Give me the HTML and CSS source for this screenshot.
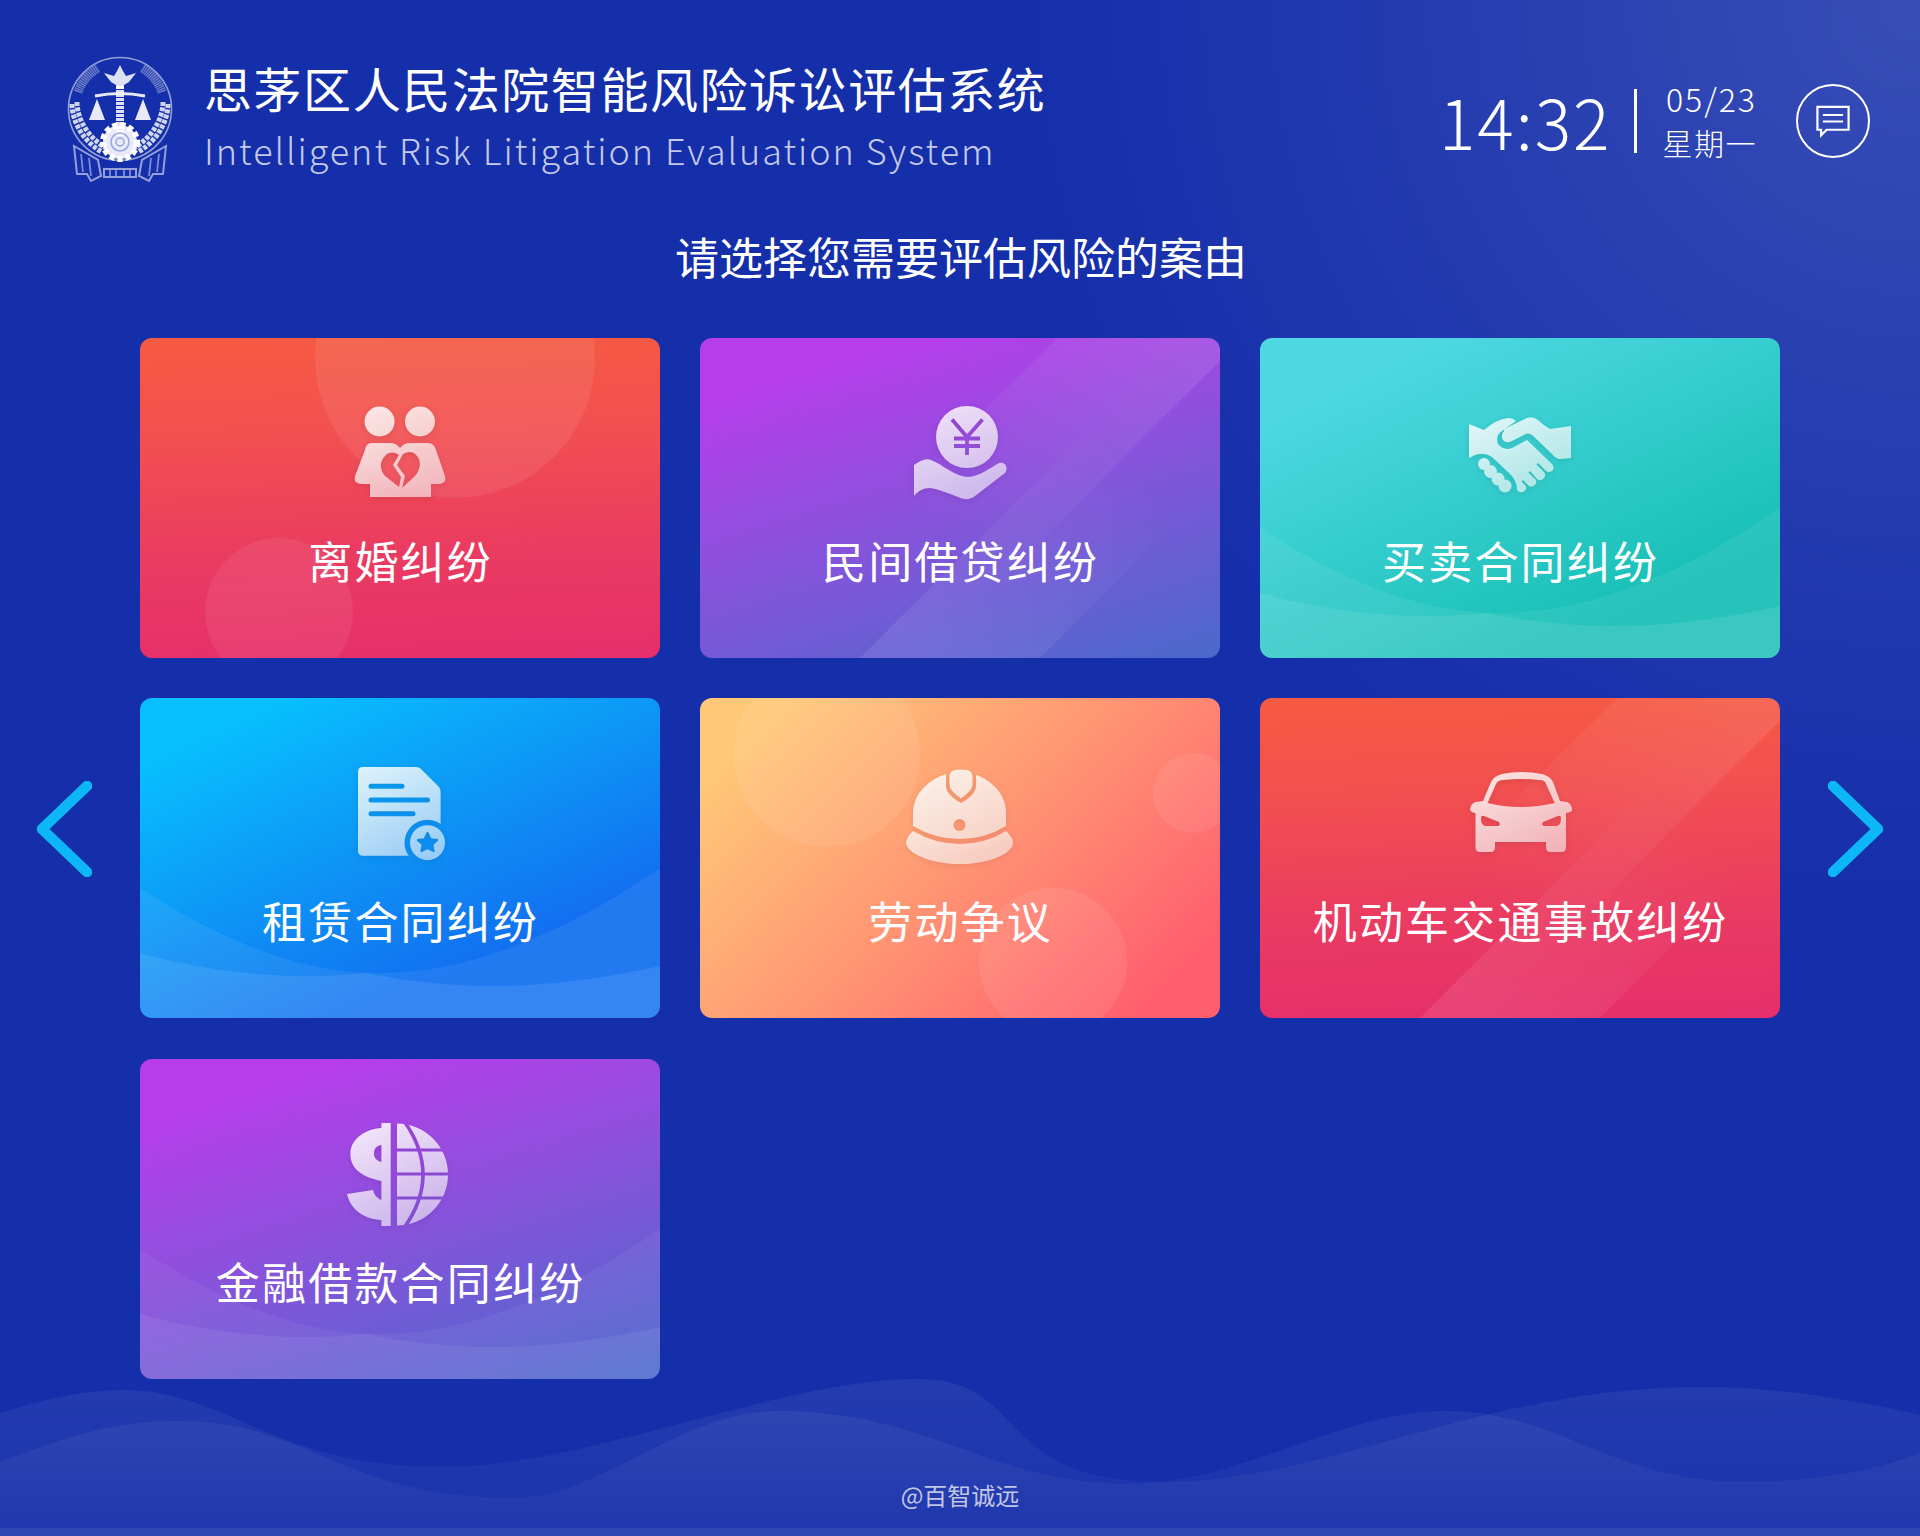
FILE: index.html
```html
<!DOCTYPE html>
<html lang="zh-CN">
<head>
<meta charset="utf-8">
<title>思茅区人民法院智能风险诉讼评估系统</title>
<link rel="stylesheet" href="styles.css">
</head>
<body>
<svg class="defs" aria-hidden="true">
  <defs>
    <linearGradient id="ig" gradientUnits="userSpaceOnUse" x1="15" y1="0" x2="70" y2="105">
      <stop offset="0" stop-color="#fff" stop-opacity=".88"/>
      <stop offset="1" stop-color="#fff" stop-opacity=".58"/>
    </linearGradient>
    <linearGradient id="bandA" gradientUnits="userSpaceOnUse" x1="480" y1="0" x2="260" y2="220">
      <stop offset="0" stop-color="#fff" stop-opacity=".09"/>
      <stop offset="1" stop-color="#fff" stop-opacity="0"/>
    </linearGradient>
    <linearGradient id="bandB" gradientUnits="userSpaceOnUse" x1="230" y1="320" x2="430" y2="120">
      <stop offset="0" stop-color="#fff" stop-opacity=".09"/>
      <stop offset="1" stop-color="#fff" stop-opacity="0"/>
    </linearGradient>
    <linearGradient id="waveFill" gradientUnits="userSpaceOnUse" x1="0" y1="0" x2="0" y2="150">
      <stop offset="0" stop-color="#fff" stop-opacity=".065"/>
      <stop offset="1" stop-color="#fff" stop-opacity=".025"/>
    </linearGradient>
    <g id="bands">
      <path d="M357,0 H543 L223,320 H37 Z" fill="url(#bandA)"/>
      <path d="M480,0 H660 L340,320 H160 Z" fill="url(#bandB)"/>
    </g>
    <g id="waves">
      <path d="M0,190 C70,235 150,275 240,275 C340,275 440,225 520,170 V320 H0Z" fill="#fff" fill-opacity=".07"/>
      <path d="M0,255 C60,272 120,278 165,278 C190,278 210,277 225,275 C265,283 310,288 352,288 C420,288 480,277 520,268 V320 H0Z" fill="#fff" fill-opacity=".09"/>
    </g>
  </defs>
</svg>

<div class="page">
  <svg class="bottom-waves" viewBox="0 0 1920 157" aria-hidden="true">
    <path d="M0,34 C45,20 85,11 122,11 C230,11 270,88 441,88 C590,88 780,0 918,0 C1030,0 990,103 1163,103 C1330,103 1480,8 1702,8 C1780,8 1860,22 1920,36 V157 H0Z" fill="url(#waveFill)"/>
    <path d="M0,83 C60,60 110,42 178,42 C310,42 340,119 514,119 C600,119 680,32 778,32 C930,32 990,105 1127,105 C1240,105 1340,32 1445,32 C1560,32 1610,103 1745,103 C1820,103 1880,90 1920,74 V157 H0Z" fill="url(#waveFill)"/>
  </svg>

  <header class="header">
    <div class="brand">
      <svg class="emblem" viewBox="0 0 112 128" aria-hidden="true">
        <circle cx="56" cy="53" r="51.5" fill="none" stroke="#fff" stroke-opacity=".55" stroke-width="1.6"/>
        <path d="M14,36 A46,46 0 0 1 34,12" fill="none" stroke="#fff" stroke-opacity=".4" stroke-width="9" stroke-dasharray="1.4 .7"/>
        <path d="M98,36 A46,46 0 0 0 78,12" fill="none" stroke="#fff" stroke-opacity=".4" stroke-width="9" stroke-dasharray="1.4 .7"/>
        <path d="M8,48 C8,66 20,86 38,96" fill="none" stroke="#fff" stroke-opacity=".8" stroke-width="5" stroke-dasharray="4 1.4"/>
        <path d="M13,46 C13,64 25,82 42,92" fill="none" stroke="#fff" stroke-opacity=".8" stroke-width="5" stroke-dasharray="4 1.4"/>
        <path d="M104,48 C104,66 92,86 74,96" fill="none" stroke="#fff" stroke-opacity=".8" stroke-width="5" stroke-dasharray="4 1.4"/>
        <path d="M99,46 C99,64 87,82 70,92" fill="none" stroke="#fff" stroke-opacity=".8" stroke-width="5" stroke-dasharray="4 1.4"/>
        <path d="M56,9 L59,15 L62,20 L72,17 L65,26 L60,29 V33 H52 V29 L47,26 L40,17 L50,20 L53,15 Z" fill="#fff" fill-opacity=".85"/>
        <path d="M56,30 V80" stroke="#fff" stroke-opacity=".85" stroke-width="8" stroke-dasharray="3 1"/>
        <path d="M31,40 Q56,35 81,40" fill="none" stroke="#fff" stroke-opacity=".9" stroke-width="3"/>
        <path d="M33,43 L41,64 H25 Z M79,43 L87,64 H71 Z" fill="#fff" fill-opacity=".9"/>
        <circle cx="56" cy="86" r="17" fill="#fff" fill-opacity=".9" stroke="#fff" stroke-width="6" stroke-dasharray="5 3"/>
        <circle cx="56" cy="86" r="9" fill="none" stroke="#9aa6dc" stroke-width="1.5"/>
        <circle cx="56" cy="86" r="4" fill="none" stroke="#9aa6dc" stroke-width="1.5"/>
        <path d="M10,90 L34,104 L37,120 L27,125 L23,118 L13,118 Z M102,90 L78,104 L75,120 L85,125 L89,118 L99,118 Z M40,113 H72 V121 H40 Z" fill="none" stroke="#fff" stroke-opacity=".55" stroke-width="2"/>
        <path d="M17,98 L19,116 M25,102 L27,120 M95,98 L93,116 M87,102 L85,120 M46,114 V120 M52,114 V120 M60,114 V120 M66,114 V120" stroke="#fff" stroke-opacity=".45" stroke-width="1.8"/>
      </svg>
      <div class="brand-text">
        <h1 class="title">思茅区人民法院智能风险诉讼评估系统</h1>
        <p class="subtitle">Intelligent Risk Litigation Evaluation System</p>
      </div>
    </div>
    <div class="status">
      <div class="time">14:32</div>
      <div class="divider"></div>
      <div class="date">
        <div class="date-num">05/23</div>
        <div class="date-week">星期一</div>
      </div>
      <div class="msg">
        <svg class="msg-icon" viewBox="0 0 36 36" aria-hidden="true">
          <path d="M1,2 H35 V27 H11 L5,33 V27 H1 Z" fill="none" stroke="#fff" stroke-width="2.4" stroke-linejoin="miter"/>
          <path d="M7,11 H29 M7,18 H29" stroke="#fff" stroke-width="2.2"/>
        </svg>
      </div>
    </div>
  </header>

  <h2 class="prompt">请选择您需要评估风险的案由</h2>

  <main class="carousel">
    <svg class="arrow" viewBox="0 0 56 96" aria-hidden="true"><path d="M51,5 L6,48 L51,91" fill="none" stroke="#0db6f6" stroke-width="10.5" stroke-linecap="round" stroke-linejoin="round"/></svg>

    <div class="grid">
      <a class="card card-red">
        <svg class="deco" viewBox="0 0 520 320" aria-hidden="true">
          <circle cx="315" cy="20" r="140" fill="#fff" fill-opacity=".08"/>
          <circle cx="139" cy="274" r="74" fill="#fff" fill-opacity=".07"/>
        </svg>
        <svg class="icon" viewBox="0 0 100 100" aria-hidden="true">
          <mask id="m1" maskUnits="userSpaceOnUse" x="-10" y="-10" width="120" height="125">
            <circle cx="29.6" cy="23.5" r="15" fill="#fff"/>
            <circle cx="70" cy="23.5" r="15" fill="#fff"/>
            <path d="M22,45 H40 Q46,45 50,50 Q54,45 60,45 H78 Q84,45 86,52 L95,78 Q97,86 88,86 H81 V99 H20 V86 H12 Q3,86 5,78 L15,52 Q16,45 22,45Z" fill="#fff"/>
            <path d="M49,57 C44,53 38,54 35,58 C29,64 30,72 35,78 L49,89 L51,79 L43,67 Z" fill="#000"/>
            <path d="M53,56 C58,53 64,53 67,58 C72,64 70,72 65,78 L52,90 L55,78 L47,67 Z" fill="#000"/>
          </mask>
          <rect x="-10" y="-10" width="120" height="125" fill="url(#ig)" mask="url(#m1)"/>
        </svg>
        <span class="card-label">离婚纠纷</span>
      </a>

      <a class="card card-purple">
        <svg class="deco" viewBox="0 0 520 320" aria-hidden="true"><use href="#bands"/></svg>
        <svg class="icon" viewBox="0 0 100 100" aria-hidden="true">
          <mask id="m2" maskUnits="userSpaceOnUse" x="-10" y="-10" width="120" height="125">
            <circle cx="57" cy="39" r="31" fill="#fff"/>
            <path d="M42,21.5 L57,39 L72.5,21.5 M57,39 V57 M44,40.5 H70 M44,48 H70" fill="none" stroke="#000" stroke-width="3.8"/>
            <path d="M4,67 C10,63 15,60 21,62 C32,66 45,79 59,79 C70,78 80,70 89,65 C95,63 99,70 95,75 L65,98 C60,102 55,102 48,99 C38,95 28,91 20,90 C13,90 8,93 4,98 Z" fill="#fff"/>
          </mask>
          <rect x="-10" y="-10" width="120" height="125" fill="url(#ig)" mask="url(#m2)"/>
        </svg>
        <span class="card-label">民间借贷纠纷</span>
      </a>

      <a class="card card-teal">
        <svg class="deco" viewBox="0 0 520 320" aria-hidden="true"><use href="#waves"/></svg>
        <svg class="icon" viewBox="0 0 100 100" aria-hidden="true">
          <mask id="m3" maskUnits="userSpaceOnUse" x="-10" y="-10" width="120" height="125">
            <path d="M-1,26 L14,32 Q27,21 38,20 Q43,20 46,23 L32,33 Q25,38 28,46 Q34,53 42,50 L57,42 L82,66 A4.5,4.5 0 0 1 76,73 L68,65 L66.5,66.5 L74,74 A5,5 0 0 1 67,81 L60,73 L58.5,74.5 L66,82 A5,5 0 0 1 59,88 L53,82 L51.5,83.5 L56,88 A5,5 0 0 1 47,92 C47,85 44,80 40,76 L22,59 Q12,52 -1,60 Z" fill="#fff"/>
            <path d="M34,31 L57,20 Q63,18 68,22 Q74,28 80,31 L101,28 V60 L90,61 Q86,61 82,56 L62,37 Q58,34 54,37 L42,43 Q36,46 33,42 Q30,37 34,33 Z" fill="#fff"/>
            <circle cx="14" cy="66" r="6" fill="#fff"/>
            <circle cx="20.5" cy="73.5" r="6.5" fill="#fff"/>
            <circle cx="28" cy="81" r="6.5" fill="#fff"/>
            <circle cx="35" cy="88" r="6.5" fill="#fff"/>
          </mask>
          <rect x="-10" y="-10" width="120" height="125" fill="url(#ig)" mask="url(#m3)"/>
        </svg>
        <span class="card-label">买卖合同纠纷</span>
      </a>

      <a class="card card-blue">
        <svg class="deco" viewBox="0 0 520 320" aria-hidden="true"><use href="#waves"/></svg>
        <svg class="icon" viewBox="0 0 100 100" aria-hidden="true">
          <mask id="m4" maskUnits="userSpaceOnUse" x="-10" y="-10" width="120" height="125">
            <path d="M13,9 H66 Q69,9 71,11 L88,28 Q90.6,30 90.6,33 V93 Q90.6,97.7 86,97.7 H13 Q8,97.7 8,93 V14 Q8,9 13,9Z" fill="#fff"/>
            <path d="M21,28.3 H52 M21,42 H77.5 M21,55.7 H63" stroke="#000" stroke-width="5" stroke-linecap="round"/>
            <circle cx="77.5" cy="84.7" r="23" fill="#000"/>
            <circle cx="77.5" cy="84.7" r="17.5" fill="#fff"/>
            <path d="M77.5,75 L80.6,81.2 L87.2,82 L82.4,86.6 L83.6,93.2 L77.5,90 L71.4,93.2 L72.6,86.6 L67.8,82 L74.4,81.2 Z" fill="#000" stroke="#000" stroke-width="2" stroke-linejoin="round"/>
          </mask>
          <rect x="-10" y="-10" width="120" height="125" fill="url(#ig)" mask="url(#m4)"/>
        </svg>
        <span class="card-label">租赁合同纠纷</span>
      </a>

      <a class="card card-orange">
        <svg class="deco" viewBox="0 0 520 320" aria-hidden="true">
          <circle cx="127" cy="56" r="93" fill="#fff" fill-opacity=".08"/>
          <circle cx="493" cy="95" r="40" fill="#fff" fill-opacity=".07"/>
          <circle cx="353" cy="264" r="74" fill="#fff" fill-opacity=".08"/>
        </svg>
        <svg class="icon" viewBox="0 0 100 100" aria-hidden="true">
          <mask id="m5" maskUnits="userSpaceOnUse" x="-10" y="-10" width="120" height="125">
            <path d="M3,68 V55 C3,35 20,20 40,15 H60 C80,20 96,35 96,55 V68 Q75,81 50,81 Q25,81 3,68Z" fill="#fff"/>
            <path d="M36,10 V28 C36,35 44,41 51,45 C58,41 66,35 66,28 V10 Z" fill="#000"/>
            <path d="M39.5,18 Q40,12 46,12 Q51,11 57,12 Q62,13 62.5,18 V27 C62,32 56,37 51,40.5 C46,37 40,32 39.5,27 Z" fill="#fff"/>
            <circle cx="49.5" cy="67" r="6" fill="#000"/>
            <path d="M3,73 Q25,86 50,86 Q75,86 96,73 Q104,80 103,86 C100,98 75,106 50,106 C25,106 0,98 -4,86 Q-4,79 3,73Z" fill="#fff"/>
          </mask>
          <rect x="-10" y="-10" width="120" height="125" fill="url(#ig)" mask="url(#m5)"/>
        </svg>
        <span class="card-label">劳动争议</span>
      </a>

      <a class="card card-red">
        <svg class="deco" viewBox="0 0 520 320" aria-hidden="true"><use href="#bands"/></svg>
        <svg class="icon" viewBox="0 0 100 100" aria-hidden="true">
          <mask id="m6" maskUnits="userSpaceOnUse" x="-10" y="-10" width="120" height="125">
            <path d="M32,16 Q52,12 72,16 Q80,18 83,24 L90,43 L97,44 Q102,46 102,52 Q102,54 96,55 V89 Q96,94 92,94 H80 Q76,94 76,89 V84 H25 V89 Q25,94 21,94 H10 Q5.5,94 5.5,89 V55 Q0,54 0,51 Q1,45 6,44 L13,43 L21,24 Q24,18 32,16Z" fill="#fff"/>
            <path d="M26,26 Q28,22 33,22 Q52,20 70,22 Q75,22 76,26 L84.7,45 Q50,53 17.6,45 Z" fill="#000"/>
            <path d="M11,60 Q11,57 14,58 L29,64 Q31,67 28,68 H16 Q11,68 11,60Z" fill="#000"/>
            <path d="M91,60 Q91,57 88,58 L73,64 Q71,67 74,68 H86 Q91,68 91,60Z" fill="#000"/>
          </mask>
          <rect x="-10" y="-10" width="120" height="125" fill="url(#ig)" mask="url(#m6)"/>
        </svg>
        <span class="card-label">机动车交通事故纠纷</span>
      </a>

      <a class="card card-purple card-soft">
        <svg class="deco" viewBox="0 0 520 320" aria-hidden="true"><use href="#waves"/></svg>
        <svg class="icon" viewBox="0 0 100 100" aria-hidden="true">
          <mask id="m7" maskUnits="userSpaceOnUse" x="-10" y="-10" width="120" height="125">
            <path d="M31.4,4 H40.7 V107 H31.4 V101 C15,100 1,92 -3,75 L23,71 C24,76 27,79 31.4,81 V62 C12,58 0,50 0.4,34 C1,20 15,10 31.4,9 Z" fill="#fff"/>
            <path d="M31.4,26 C25,27 24,31 24,35 C24,39 27,42 31.4,43 Z" fill="#000"/>
            <path d="M47,4.5 A51,51 0 0 1 47,106.5 Z" fill="#fff"/>
            <path d="M54,2 Q92,55.5 54,109" fill="none" stroke="#000" stroke-width="3.6"/>
            <path d="M44,31 H100 M44,55 H100 M44,79 H100" stroke="#000" stroke-width="3.2"/>
          </mask>
          <rect x="-10" y="-10" width="120" height="125" fill="url(#ig)" mask="url(#m7)"/>
        </svg>
        <span class="card-label">金融借款合同纠纷</span>
      </a>
    </div>

    <svg class="arrow" viewBox="0 0 56 96" aria-hidden="true"><path d="M5,5 L50,48 L5,91" fill="none" stroke="#0db6f6" stroke-width="10.5" stroke-linecap="round" stroke-linejoin="round"/></svg>
  </main>

  <footer class="footer">@百智诚远</footer>
</div>
</body>
</html>
```

FILE: styles.css
```css
* { box-sizing: border-box; }
html, body { margin: 0; padding: 0; }
body {
  width: 1920px;
  height: 1536px;
  overflow: hidden;
  font-family: "Noto Sans CJK SC", "Noto Sans", sans-serif;
  color: #fff;
  background: #152eaa;
}
.defs { position: absolute; width: 0; height: 0; }
.page {
  position: relative;
  width: 1920px;
  height: 1536px;
  display: flex;
  flex-direction: column;
  overflow: hidden;
  background:
    radial-gradient(ellipse 900px 900px at 100% 0, rgba(255,255,255,.15), rgba(255,255,255,0) 100%),
    #152eaa;
}
.page::after {
  content: "";
  position: absolute;
  left: 0;
  right: 0;
  bottom: 0;
  height: 8px;
  background: rgba(255,255,255,.07);
}
.bottom-waves {
  position: absolute;
  left: 0;
  top: 1379px;
  width: 1920px;
  height: 157px;
}

/* header */
.header {
  display: flex;
  justify-content: space-between;
  align-items: flex-start;
  height: 218px;
  padding: 56px 50px 0 64px;
  position: relative;
}
.brand { display: flex; gap: 28px; }
.emblem { width: 112px; height: 128px; flex: none; filter: blur(.35px); }
.title {
  margin: 0;
  font-size: 48px;
  line-height: 62px;
  font-weight: 400;
  letter-spacing: 1.55px;
  white-space: nowrap;
}
.subtitle {
  margin: 0;
  padding-top: 6px;
  font-size: 36px;
  line-height: 50px;
  font-weight: 300;
  letter-spacing: 1.95px;
  color: rgba(255,255,255,.75);
  white-space: nowrap;
}
.status { display: flex; align-items: center; padding-top: 20px; }
.time {
  font-size: 68px;
  line-height: 90px;
  font-weight: 300;
  letter-spacing: 2px;
}
.divider {
  width: 3px;
  height: 64px;
  background: #fff;
  margin: 0 26px 0 22px;
}
.date { text-align: right; margin-top: -3px; }
.date-num { font-size: 32px; line-height: 44px; font-weight: 300; letter-spacing: 2px; }
.date-week { font-size: 30px; line-height: 44px; font-weight: 300; letter-spacing: 1.5px; }
.msg {
  width: 74px;
  height: 74px;
  margin-left: 39px;
  border: 2.5px solid #fff;
  border-radius: 50%;
  display: flex;
  align-items: center;
  justify-content: center;
}
.msg-icon { width: 36px; height: 33px; }

/* prompt */
.prompt {
  margin: 0;
  height: 120px;
  padding-top: 8px;
  padding-left: 2px;
  font-size: 44px;
  line-height: 60px;
  font-weight: 400;
  text-align: center;
  position: relative;
}

/* carousel */
.carousel {
  display: flex;
  justify-content: space-between;
  align-items: flex-start;
  padding: 0 36px;
  position: relative;
}
.arrow { width: 56px; height: 96px; margin-top: 443px; flex: none; }
.grid {
  display: grid;
  grid-template-columns: repeat(3, 520px);
  grid-template-rows: 320px 321px 320px;
  align-items: start;
  column-gap: 40px;
  row-gap: 40px;
  margin-left: 11px;
  margin-right: 12px;
}
.card {
  position: relative;
  height: 320px;
  display: flex;
  flex-direction: column;
  align-items: center;
  padding-top: 60px;
  border-radius: 12px;
  overflow: hidden;
}
.card-red { background: linear-gradient(178deg, #f65a42 0%, #f25050 30%, #ea3c60 65%, #e62e6c 100%); }
.card-purple { background: linear-gradient(163deg, #b83dea 12%, #8a52dc 50%, #4a69cc 100%); }
.card-soft .deco { opacity: .75; }
.card-teal { background: linear-gradient(155deg, #4dd8e2 15%, #17bfb5 80%); }
.card-blue { background: linear-gradient(155deg, #08bffd 12%, #1270f0 75%); }
.card-orange { background: linear-gradient(135deg, #ffc878 10%, #ff9c74 45%, #ff5e6e 90%); }
.deco { position: absolute; left: 0; top: 0; width: 520px; height: 320px; }
.icon {
  position: relative;
  width: 100px;
  height: 100px;
  overflow: visible;
  flex: none;
  filter: drop-shadow(0 2px 3px rgba(0,0,0,.12));
}
.card-label {
  position: relative;
  margin-top: 32px;
  padding-left: 2.2px;
  font-size: 44px;
  line-height: 60px;
  letter-spacing: 2.2px;
  white-space: nowrap;
}

/* footer */
.footer {
  position: absolute;
  left: 0;
  right: 0;
  top: 1480px;
  font-size: 24px;
  line-height: 30px;
  text-align: center;
  color: rgba(255,255,255,.72);
}
```
